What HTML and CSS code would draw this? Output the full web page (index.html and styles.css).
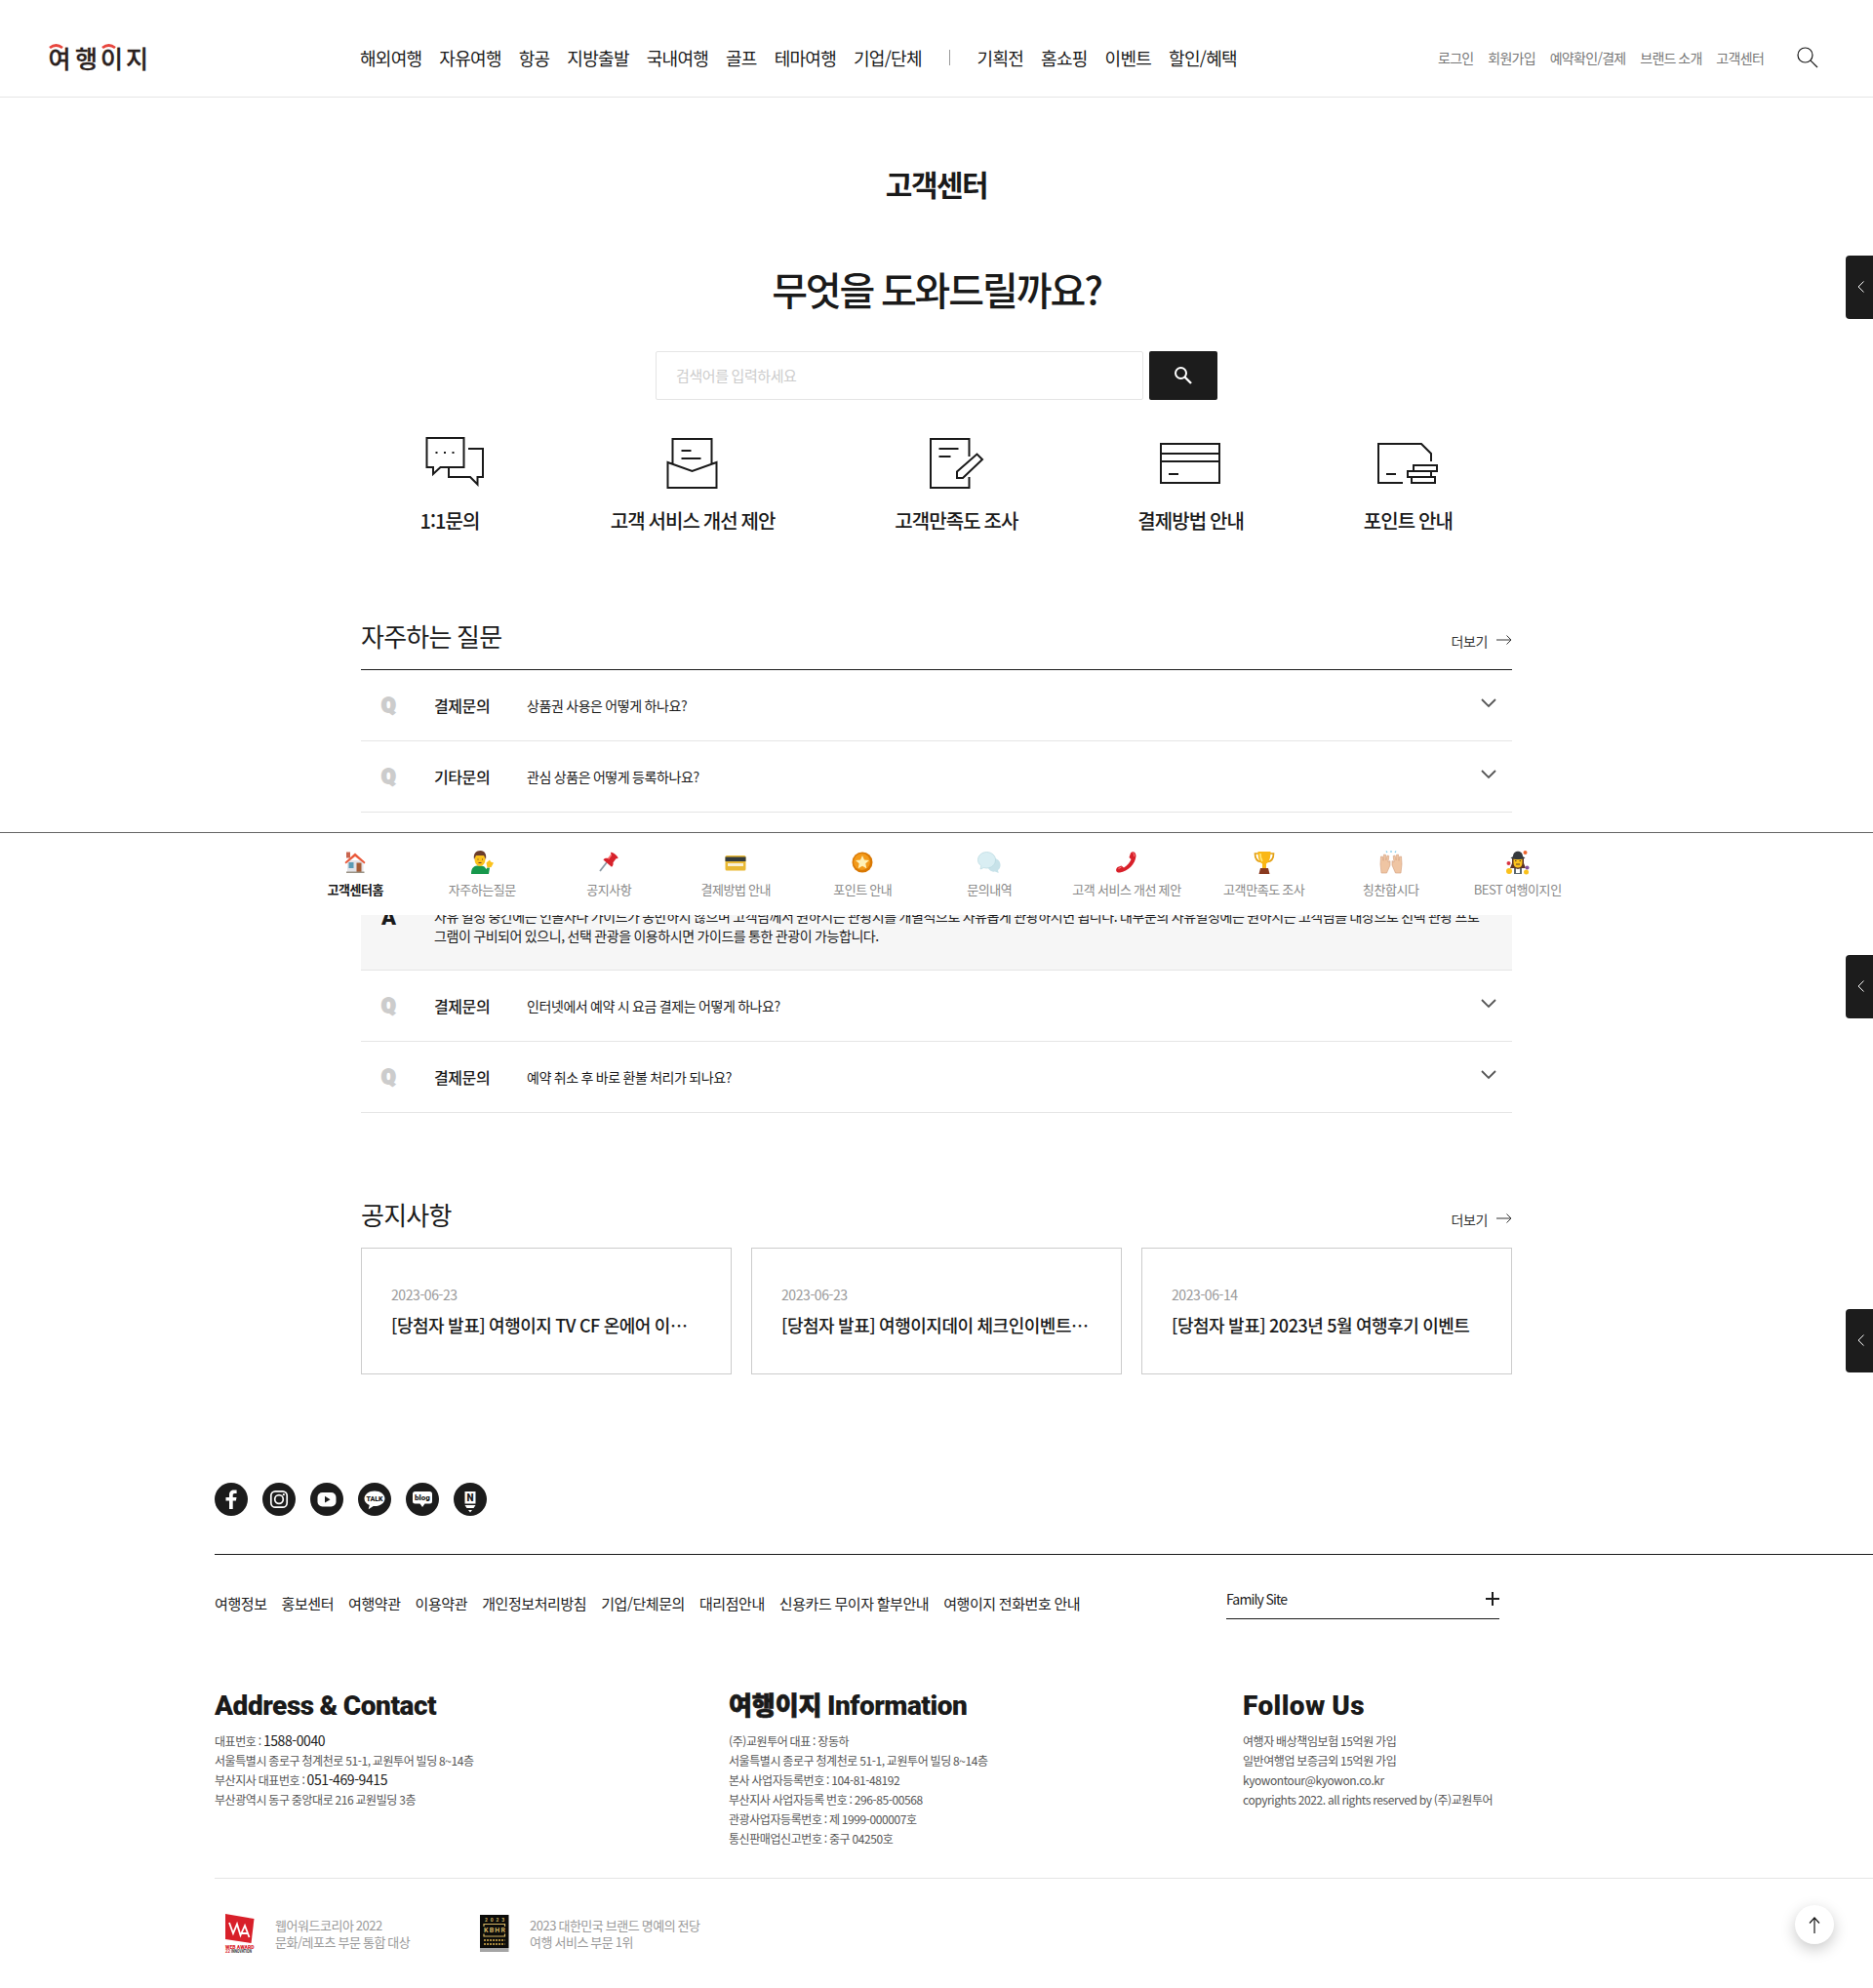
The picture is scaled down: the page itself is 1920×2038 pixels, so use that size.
FILE: index.html
```html
<!DOCTYPE html>
<html lang="ko">
<head>
<meta charset="utf-8">
<title>고객센터 - 여행이지</title>
<link rel="stylesheet" href="styles.css">
</head>
<body>
<header class="header">
  <a class="logo">
    <svg width="104" height="36" viewBox="0 0 104 36">
      <g class="logo-text"><text x="-.500" y="29.500">여</text><text x="27" y="29.500">행</text><text x="53" y="29.500">이</text><text x="79" y="29.500">지</text></g>
      <path d="M1 9Q7.500 4 14 9M55 9Q61.500 4 68 9" fill="none" stroke="#e8473f" stroke-width="2.800"/>
    </svg>
  </a>
  <nav class="gnb">
    <a>해외여행</a><a>자유여행</a><a>항공</a><a>지방출발</a><a>국내여행</a><a>골프</a><a>테마여행</a><a>기업/단체</a>
    <i class="divider"></i>
    <a>기획전</a><a>홈쇼핑</a><a>이벤트</a><a>할인/혜택</a>
  </nav>
  <div class="util"><a>로그인</a><a>회원가입</a><a>예약확인/결제</a><a>브랜드 소개</a><a>고객센터</a></div>
  <svg class="search-open" width="22" height="22" viewBox="0 0 22 22" fill="none" stroke="#1a1a1a" stroke-width="1.200"><circle cx="8.500" cy="8.500" r="7.500"/><path d="M13.800 13.800L21 21"/></svg>
</header>

<main class="main">
  <h1 class="page-title">고객센터</h1>
  <h2 class="help-title">무엇을 도와드릴까요?</h2>
  <form class="search">
    <div class="search-input">검색어를 입력하세요</div>
    <div class="search-btn"><svg width="20" height="20" viewBox="0 0 20 20" fill="none" stroke="#fff" stroke-width="2"><circle cx="7.500" cy="7.500" r="5.500"/><path d="M11.500 11.500L18 18" stroke-width="2.400"/></svg></div>
  </form>

  <div class="quick">
    <a class="quick-item first">
      <svg width="84" height="60" viewBox="0 0 84 60"><path d="M18.500 6h38v30h-24L25 43v-7h-6.500z"/><path d="M61 17h15v29h-5.500v7.500L63 46H41V36"/><path d="M27.500 21h2m6.500 0h2m6.500 0h2"/></svg>
      <span>1:1문의</span>
    </a>
    <a class="quick-item">
      <svg width="84" height="60" viewBox="0 0 84 60"><path d="M16.500 31V57h50V31L41.500 40zM21.500 32V7h40V32M30.500 19h10M30.500 27h20"/></svg>
      <span>고객 서비스 개선 제안</span>
    </a>
    <a class="quick-item">
      <svg width="84" height="60" viewBox="0 0 84 60"><path d="M55.500 25V7H16V57h39.500V46M24.500 17h20M24.500 25h12"/><path d="M43 47v-6.500L63.500 22.500 69 28 49 47z"/></svg>
      <span>고객만족도 조사</span>
    </a>
    <a class="quick-item">
      <svg width="84" height="60" viewBox="0 0 84 60"><path d="M11 12h60v40H11zM11 22h60M11 30h60M19 43h10"/></svg>
      <span>결제방법 안내</span>
    </a>
    <a class="quick-item">
      <svg width="84" height="60" viewBox="0 0 84 60"><path d="M37 52H12V12h44l10 10v8M20 43h10M48 34h24v6H48zM42 40h24v6H42zM46 46h24v6H46z"/></svg>
      <span>포인트 안내</span>
    </a>
  </div>

  <section class="faq">
    <div class="section-head">
      <h3>자주하는 질문</h3>
      <a class="more">더보기<svg width="16" height="10" viewBox="0 0 16 10"><path d="M0 5h15M10.500 .5L15 5l-4.500 4.500"/></svg></a>
    </div>
    <ul class="faq-list">
      <li class="faq-row"><b class="q">Q</b><strong>결제문의</strong><span>상품권 사용은 어떻게 하나요?</span><svg class="chev" width="16" height="10" viewBox="0 0 16 10"><path d="M1 1l7 7 7-7"/></svg></li>
      <li class="faq-row"><b class="q">Q</b><strong>기타문의</strong><span>관심 상품은 어떻게 등록하나요?</span><svg class="chev" width="16" height="10" viewBox="0 0 16 10"><path d="M1 1l7 7 7-7"/></svg></li>
      <li class="faq-row"></li>
      <li class="faq-answer"><b class="q a">A</b><p>자유 일정 중간에는 인솔자나 가이드가 동반하지 않으며 고객님께서 원하시는 관광지를 개별적으로 자유롭게 관광하시면 됩니다. 대부분의 자유일정에는 원하시는 고객님을 대상으로 선택 관광 프로<br>그램이 구비되어 있으니, 선택 관광을 이용하시면 가이드를 통한 관광이 가능합니다.</p></li>
      <li class="faq-row"><b class="q">Q</b><strong>결제문의</strong><span>인터넷에서 예약 시 요금 결제는 어떻게 하나요?</span><svg class="chev" width="16" height="10" viewBox="0 0 16 10"><path d="M1 1l7 7 7-7"/></svg></li>
      <li class="faq-row"><b class="q">Q</b><strong>결제문의</strong><span>예약 취소 후 바로 환불 처리가 되나요?</span><svg class="chev" width="16" height="10" viewBox="0 0 16 10"><path d="M1 1l7 7 7-7"/></svg></li>
    </ul>
  </section>

  <section class="notice">
    <div class="section-head">
      <h3>공지사항</h3>
      <a class="more">더보기<svg width="16" height="10" viewBox="0 0 16 10"><path d="M0 5h15M10.500 .5L15 5l-4.500 4.500"/></svg></a>
    </div>
    <div class="cards">
      <a class="card"><time>2023-06-23</time><p>[당첨자 발표] 여행이지 TV CF 온에어 이⋯</p></a>
      <a class="card"><time>2023-06-23</time><p>[당첨자 발표] 여행이지데이 체크인이벤트⋯</p></a>
      <a class="card"><time>2023-06-14</time><p>[당첨자 발표] 2023년 5월 여행후기 이벤트</p></a>
    </div>
  </section>
</main>

<footer class="footer">
  <div class="social">
    <svg width="34" height="34" viewBox="0 0 34 34"><circle cx="17" cy="17" r="17" fill="#1c1c1c"/><path d="M15 27V18.500h-3.500V15H15v-2.500c0-3.500 2-5 4.600-5h3v3.400h-2c-1.400 0-1.900.7-1.900 1.900V15h3.800l-.6 3.500h-3.200V27z" fill="#fff"/></svg>
    <svg width="34" height="34" viewBox="0 0 34 34"><circle cx="17" cy="17" r="17" fill="#1c1c1c"/><g fill="none" stroke="#fff" stroke-width="1.700"><rect x="8.800" y="8.800" width="16.400" height="16.400" rx="4.500"/><circle cx="17" cy="17" r="4.300"/></g><circle cx="21.800" cy="12.200" r="1.100" fill="#fff"/></svg>
    <svg width="34" height="34" viewBox="0 0 34 34"><circle cx="17" cy="17" r="17" fill="#1c1c1c"/><rect x="7.500" y="10" width="19" height="14.500" rx="5" fill="#fff"/><path d="M15 13.800l5.500 3.400-5.500 3.400z" fill="#1c1c1c"/></svg>
    <svg width="34" height="34" viewBox="0 0 34 34"><circle cx="17" cy="17" r="17" fill="#1c1c1c"/><path d="M17 8.500c-6 0-10.500 3.400-10.500 7.800 0 3 2 5.500 5.200 6.800l-1 4.200 5-3.200H17c6 0 10.500-3.400 10.500-7.800S23 8.500 17 8.500z" fill="#fff"/><text x="17" y="18.700" class="talk">TALK</text></svg>
    <svg width="34" height="34" viewBox="0 0 34 34"><circle cx="17" cy="17" r="17" fill="#1c1c1c"/><path d="M9.500 9h15a2.500 2.500 0 0 1 2.500 2.500v7.500a2.500 2.500 0 0 1-2.500 2.500H19.500L17 25l-2.500-3.500h-5A2.500 2.500 0 0 1 7 19v-7.500A2.500 2.500 0 0 1 9.500 9z" fill="#fff"/><text x="17" y="18" class="talk blog">blog</text></svg>
    <svg width="34" height="34" viewBox="0 0 34 34"><circle cx="17" cy="17" r="17" fill="#1c1c1c"/><path d="M11.500 9h11v12.500h-11zM11.500 23h11l-2 3h-7zM15 28h4l-2 2.500z" fill="#fff"/><text x="17" y="18.500" class="talk band">N</text></svg>
  </div>
  <div class="foot-nav">
    <div class="links"><a>여행정보</a><a>홍보센터</a><a>여행약관</a><a>이용약관</a><a>개인정보처리방침</a><a>기업/단체문의</a><a>대리점안내</a><a>신용카드 무이자 할부안내</a><a>여행이지 전화번호 안내</a></div>
    <div class="family">Family Site<svg width="14" height="14" viewBox="0 0 14 14"><path d="M0 7h14M7 0v14" stroke="#1c1c1c" stroke-width="2"/></svg></div>
  </div>
  <div class="info">
    <div class="col"><h4 class="h-addr">Address &amp; Contact</h4><p>대표번호 : <em>1588-0040</em></p><p>서울특별시 종로구 청계천로 51-1, 교원투어 빌딩 8~14층</p><p>부산지사 대표번호 : <em>051-469-9415</em></p><p>부산광역시 동구 중앙대로 216 교원빌딩 3층</p></div>
    <div class="col"><h4><span class="ko">여행이지</span> Information</h4><p>(주)교원투어 대표 : 장동하</p><p>서울특별시 종로구 청계천로 51-1, 교원투어 빌딩 8~14층</p><p>본사 사업자등록번호 : 104-81-48192</p><p>부산지사 사업자등록 번호 : 296-85-00568</p><p>관광사업자등록번호 : 제 1999-000007호</p><p>통신판매업신고번호 : 중구 04250호</p></div>
    <div class="col"><h4 class="h-follow">Follow Us</h4><p>여행자 배상책임보험 15억원 가입</p><p>일반여행업 보증금외 15억원 가입</p><p>kyowontour@kyowon.co.kr</p><p>copyrights 2022. all rights reserved by (주)교원투어</p></div>
  </div>
  <div class="awards">
    <svg width="30" height="41" viewBox="0 0 30 41"><path d="M0 0l29.500 5-3 25L0 26z" fill="#d8202a"/><path d="M4 9l4 11 4-9.500 3.500 11.500L20 12l4.500 12M17 20h6" fill="none" stroke="#fff" stroke-width="1.800"/><text x="0" y="35.500" class="wa" fill="#d8202a" textLength="29.500" lengthAdjust="spacingAndGlyphs">WEB AWARD</text><text x="0" y="39.700" class="wb" fill="#d8202a">22</text><text x="6" y="39.700" class="wb" fill="#333" textLength="21" lengthAdjust="spacingAndGlyphs">INNOVATION</text></svg>
    <p class="aw1">웹어워드코리아 2022<br>문화/레포츠 부문 통합 대상</p>
    <svg width="30" height="41" viewBox="0 0 30 41"><rect x="0" y="1" width="29.500" height="34" fill="#0c0c0a"/><rect x="0" y="35" width="29.500" height="4" fill="#a5a5a5"/><g fill="#d3b463"><text x="5" y="8" class="kb-s" textLength="20">2023</text><text x="4" y="19.300" class="kb" textLength="22">KBHR</text></g><path d="M4 13V10.500h21.500V13M4 20.500V23h21.500v-2.500" fill="none" stroke="#d3b463" stroke-width="1.200"/><path d="M4 27h21.500M4 31h21.500" stroke="#a8873b" stroke-width="2" stroke-dasharray="2 1"/></svg>
    <p>2023 대한민국 브랜드 명예의 전당<br>여행 서비스 부문 1위</p>
  </div>
</footer>

<nav class="dock">
  <a class="on"><svg width="24" height="24" viewBox="0 0 24 24"><path d="M4 10h16.500v12H4z" fill="#e3e3e8"/><path d="M3 1.500h4v6H3z" fill="#c9644e"/><path d="M1.500 12L12 2.500 22.500 12l-1 1.500L12 6l-9.500 7.500z" fill="#ea5a3c"/><path d="M5.500 12h5v6h-5z" fill="#5b9bb5"/><path d="M13.500 12.500h5V22h-5z" fill="#a65b35"/><path d="M3 21.500h18.500V23H3z" fill="#9a9284"/></svg>고객센터홈</a>
  <a><svg width="24" height="24" viewBox="0 0 24 24"><path d="M1 24c0-7 3-8.500 8-8.500s6 1 7.500 3.500l1-1.500h2.500l-1 6.500z" fill="#17984c"/><path d="M16.500 12.500l3.500-3 1 2 3 1-2.500 4.500-4 .5z" fill="#fbc21c"/><ellipse cx="10" cy="9" rx="5.500" ry="7" fill="#fbc21c"/><path d="M4 9C3 3 6 0 10.500 0S17 4 16 9l-2-4H6z" fill="#6a3c2b"/><path d="M7.500 9h1m3.500 0h1M8.500 12.500h3" stroke="#6a3c2b"/></svg>자주하는질문</a>
  <a><svg width="24" height="24" viewBox="0 0 24 24"><path d="M3 21L10 12" stroke="#8b9aa5" stroke-width="1.800"/><path d="M14 2c2-1 8 4 7.500 6l-2 .3-3 4c.5 2-.5 4-1.500 4.500L6.500 9.500C7 8 9.500 7.500 11 8l3.500-3.500z" fill="#d7222b"/><path d="M14.500 4.500l-3 4" stroke="#ff7977" stroke-width="1.500"/></svg>공지사항</a>
  <a><svg width="24" height="24" viewBox="0 0 24 24"><rect x="1.500" y="5" width="21" height="15.500" rx="1.500" fill="#e9b934"/><path d="M1.500 6.500h21v4.500h-21z" fill="#333b3e"/><path d="M4 13h16v3H4z" fill="#f8f0d5"/></svg>결제방법 안내</a>
  <a><svg width="24" height="24" viewBox="0 0 24 24"><circle cx="12" cy="12" r="10.500" fill="#d97803"/><circle cx="11.500" cy="11.500" r="8.500" fill="#f39a1a"/><path d="M12 5l2 4.500 5 .5-3.700 3.300 1 4.900L12 15.700l-4.300 2.500 1-4.900L5 10l5-.5z" fill="#fff1b8"/></svg>포인트 안내</a>
  <a><svg width="24" height="24" viewBox="0 0 24 24"><path d="M14 8c6-1 10 3 9.500 7.500-.2 2-1.200 3.500-2.500 4.500l.7 3-3.700-1.500c-4 .8-7-2-7.500-5z" fill="#c7e2e9"/><path d="M9.500 1.500c5 0 9 3.500 9 8s-4 8.500-9 8.500c-1 0-2-.2-3-.5L3 19l.8-3.500C1.500 14 .5 12 .5 9.500c0-4.500 4-8 9-8z" fill="#d9eef3" stroke="#b7d8df" stroke-width=".7"/></svg>문의내역</a>
  <a><svg width="24" height="24" viewBox="0 0 24 24"><path d="M16 2.500c2-2.500 5.500-1 5.500 3C21 14 13 21 5 22.500c-4 .5-5-3-2.500-5.500l4-1.500 2.500 2c3.500-2 6-5 7.500-8.500l-2-2z" fill="#d8202a"/><path d="M18 3c1.500-1 2 1 1.500 3M3.500 18.500l3-1.500" stroke="#ff8080" fill="none"/></svg>고객 서비스 개선 제안</a>
  <a><svg width="24" height="24" viewBox="0 0 24 24"><path d="M6 3H2.500c0 5 2 8 6 8.500M18 3h3.500c0 5-2 8-6 8.500" fill="none" stroke="#e3a012" stroke-width="1.700"/><path d="M5.500 1h13c0 7-1.500 11-4.500 12.500V18h-4v-4.500C7 12 5.500 8 5.500 1z" fill="#fab816"/><path d="M8 3c0 4 .5 6 2 8" stroke="#ffe77a" stroke-width="1.600" fill="none"/><path d="M8 18h8l1.500 6h-11z" fill="#8a3a1f"/></svg>고객만족도 조사</a>
  <a><svg width="24" height="24" viewBox="0 0 24 24"><path d="M2 23l-1-9 .5-8 2 .3.500 4L4.500 4l2 .3.300 5.500L8 5l1.800.5L9 12l2-1.500L11 15l-3.500 8zM22 23l1-9-.5-8-2 .3-.5 4L19.500 4l-2 .3-.3 5.500L16 5l-1.800.5L15 12l-2-1.500L13 15l3.500 8z" fill="#efc5a3" stroke="#d19d7c" stroke-width=".6"/><path d="M8 2L7 .5M12 2V0M16 2l1-1.500" stroke="#77c7e7" stroke-width="1.200"/></svg>칭찬합시다</a>
  <a><svg width="24" height="24" viewBox="0 0 24 24"><path d="M8 24v-6h8v6z" fill="#5c6870"/><path d="M10 17h4v6h-4z" fill="#fff"/><path d="M6 7h12v6l2 5h-4.500L12 19l-3.500-1H4l2-5z" fill="#5b3428"/><path d="M7.500 7h9v6c0 6-9 6-9 0z" fill="#fbc21c"/><path d="M7 6c0-7 10-7 10 0l2.500 1.500c-4 2-11 2-15 0z" fill="#35393d"/><path d="M9 10.500h1.500m3 0H15M10 14h4" stroke="#60402c"/><circle cx="19.500" cy="2" r="2" fill="#ed642e"/><circle cx="2.500" cy="13" r="2" fill="#d93442"/><circle cx="21.500" cy="17.500" r="2" fill="#84519d"/><circle cx="3" cy="21" r="3" fill="#fbc21c"/><circle cx="20.500" cy="22" r="2.500" fill="#fbc21c"/></svg>BEST 여행이지인</a>
</nav>

<a class="tab t1"><svg width="8" height="12" viewBox="0 0 8 12"><path d="M6.500 .5L1 6l5.500 5.500"/></svg></a>
<a class="tab t2"><svg width="8" height="12" viewBox="0 0 8 12"><path d="M6.500 .5L1 6l5.500 5.500"/></svg></a>
<a class="tab t3"><svg width="8" height="12" viewBox="0 0 8 12"><path d="M6.500 .5L1 6l5.500 5.500"/></svg></a>
<a class="to-top"><svg width="12" height="17" viewBox="0 0 12 17" fill="none" stroke="#1a1a1a" stroke-width="1.200"><path d="M6 17V1M1 6.500L6 1l5 5.500"/></svg></a>
</body>
</html>
```
FILE: styles.css
```css
* { box-sizing: border-box; margin: 0; padding: 0; }
body {
  position: relative;
  width: 1920px;
  height: 2038px;
  overflow: hidden;
  background: #fff;
  color: #1a1a1a;
  font-family: "Noto Sans CJK KR", sans-serif;
  font-size: 14px;
  letter-spacing: -0.42px;
  word-spacing: -0.7px;
}
a, span, p { white-space: nowrap; }
svg { display: block; flex: none; overflow: visible; }
ul { list-style: none; }

.header { display: flex; align-items: center; height: 100px; padding: 19px 0 0 50px; border-bottom: 1px solid #e5e5e5; line-height: 24px; }
.logo { width: 319px; }
.logo svg { margin-top: -3px; }
.logo-text { fill: #2b211e; stroke: #2b211e; stroke-width: .3px; font-size: 25px; font-weight: 500; letter-spacing: 0; }
.gnb { display: flex; align-items: center; gap: 17.9px; width: 1105px; font-size: 18px; letter-spacing: -0.7px; }
.divider { width: 1px; height: 16px; margin: 0 10px; background: #999; }
.util { display: flex; gap: 14.7px; width: 368px; color: #777; letter-spacing: -0.7px; }

.main { display: flex; flex-direction: column; align-items: center; }
.page-title { margin-top: 68px; font-size: 30px; line-height: 40px; font-weight: 700; letter-spacing: -0.05em; }
.help-title { margin-top: 58px; font-size: 40px; line-height: 60px; font-weight: 500; letter-spacing: -0.052em; word-spacing: -1.5px; }
.search { display: flex; gap: 6px; margin-top: 34px; }
.search-input { width: 500px; height: 50px; padding-left: 20px; border: 1px solid #e5e5e5; border-radius: 2px; color: #ccc; font-size: 15px; line-height: 48px; }
.search-btn { display: flex; align-items: center; justify-content: center; width: 70px; height: 50px; border-radius: 2px; background: #1c1c1c; }

.quick { display: flex; justify-content: space-between; align-self: flex-start; width: 1070px; margin: 33px 0 0 419px; }
.quick-item { display: flex; flex-direction: column; align-items: center; gap: 16px; font-size: 20px; line-height: 30px; font-weight: 500; letter-spacing: -0.9px; word-spacing: -1px; }
.quick-item.first { width: 84px; }
.quick-item svg { fill: none; stroke: #1a1a1a; stroke-width: 2; }

.section-head { display: flex; justify-content: space-between; align-items: flex-start; }
.section-head h3 { height: 40px; font-size: 26px; line-height: 38px; font-weight: 400; letter-spacing: -0.75px; word-spacing: -1.2px; }
.more { display: flex; align-items: center; gap: 9px; padding-top: 14px; color: #333; line-height: 20px; }
.more svg { fill: none; stroke: #333; margin-top: -2px; }
.faq, .notice { width: 1180px; }
.faq { margin-top: 84px; }
.faq-list { margin-top: 13px; border-top: 1px solid #1a1a1a; }
.faq-row { display: flex; align-items: center; height: 73px; padding: 0 16px 0 21px; border-bottom: 1px solid #e5e5e5; line-height: 20px; }
.q { width: 54px; padding-bottom: 1px; color: #ccc; font: 900 21px/22px Roboto, sans-serif; letter-spacing: 0; -webkit-text-stroke: 1.8px #ccc; }
.faq-row strong { width: 95px; font-size: 16px; font-weight: 500; }
.faq-row span { flex: 1; }
.chev { fill: none; stroke: #555; stroke-width: 1.8; margin-top: -4px; }
.faq-answer { display: flex; height: 89px; padding: 23px 0 0 21px; border-bottom: 1px solid #e5e5e5; background: #f6f6f6; line-height: 20px; }
.q.a { padding-top: 1px; color: #1a1a1a; font-size: 22px; -webkit-text-stroke: 0; }
.notice { margin-top: 85px; }
.cards { display: flex; gap: 20px; margin-top: 13px; }
.card { width: 380px; height: 130px; padding: 37px 30px 0; border: 1px solid #ccc; }
.card time { display: block; color: #999; line-height: 20px; }
.card p { margin-top: 7px; font-size: 18px; line-height: 28px; font-weight: 500; letter-spacing: -0.47px; }

.footer { margin-top: 111px; padding-left: 220px; }
.social { display: flex; gap: 15px; }
.talk { fill: #1a1a1a; font: 900 7px Roboto, sans-serif; text-anchor: middle; letter-spacing: 0; }
.blog { font-size: 8px; }
.band { font-size: 10px; }
.foot-nav { display: flex; height: 107px; margin-top: 39px; padding-top: 32px; border-top: 1px solid #1a1a1a; }
.links { display: flex; gap: 15px; width: 1037px; padding-top: 6px; font-size: 15px; line-height: 24px; }
.family { display: flex; align-items: center; justify-content: space-between; width: 280px; height: 34px; padding-bottom: 8px; border-bottom: 1px solid #1a1a1a; letter-spacing: -0.85px; }
.info { display: flex; height: 226px; padding-top: 30px; border-bottom: 1px solid #e5e5e5; color: #555; font-size: 12px; line-height: 20px; }
.col { width: 527px; }
.col h4 { height: 45px; padding-top: 1px; color: #1a1a1a; font: 900 28px/36px Roboto, "Noto Sans CJK KR", sans-serif; letter-spacing: -0.5px; white-space: nowrap; }
.col .h-addr { letter-spacing: -0.45px; }
.col .h-follow { letter-spacing: 0.4px; }
.col em { color: #1a1a1a; font-size: 14px; font-style: normal; line-height: 18px; }
.ko { font-family: "Noto Sans CJK KR", sans-serif; font-size: 26px; line-height: 0; letter-spacing: -0.1px; -webkit-text-stroke: .7px #1a1a1a; }
.awards { display: flex; padding: 36px 0 0 11px; color: #999; font-size: 13px; line-height: 17px; letter-spacing: -0.48px; }
.awards p { margin: 3px 0 0 21px; }
.awards .aw1 { width: 210px; }
.wa { font: 900 6px Roboto, sans-serif; letter-spacing: 0; word-spacing: 0; }
.wb { font: 700 4.5px Roboto, sans-serif; letter-spacing: 0; }
.kb { font: 700 7px Roboto, sans-serif; letter-spacing: 0; }
.kb-s { font: 700 5px Roboto, sans-serif; letter-spacing: 0; }

.dock { position: absolute; top: 853px; left: 0; display: flex; justify-content: center; width: 1920px; height: 85px; padding-top: 18px; border-top: 1px solid #666; background: #fff; color: #888; font-size: 13px; line-height: 18px; }
.dock a { display: flex; flex-direction: column; align-items: center; gap: 7px; min-width: 130px; padding: 0 20px; }
.dock .on { color: #1a1a1a; font-weight: 700; }
.tab { position: absolute; right: 0; display: flex; align-items: center; justify-content: center; width: 28px; height: 65px; padding: 0 0 2px 3px; border-radius: 4px 0 0 4px; background: #1c1c1c; }
.tab svg { fill: none; stroke: #fff; }
.t1 { top: 262px; }
.t2 { top: 979px; }
.t3 { top: 1342px; }
.to-top { position: absolute; left: 1840px; top: 1953px; display: flex; align-items: center; justify-content: center; width: 40px; height: 40px; border-radius: 50%; background: #fff; box-shadow: 0 5px 15px rgba(0, 0, 0, .22); }
```
